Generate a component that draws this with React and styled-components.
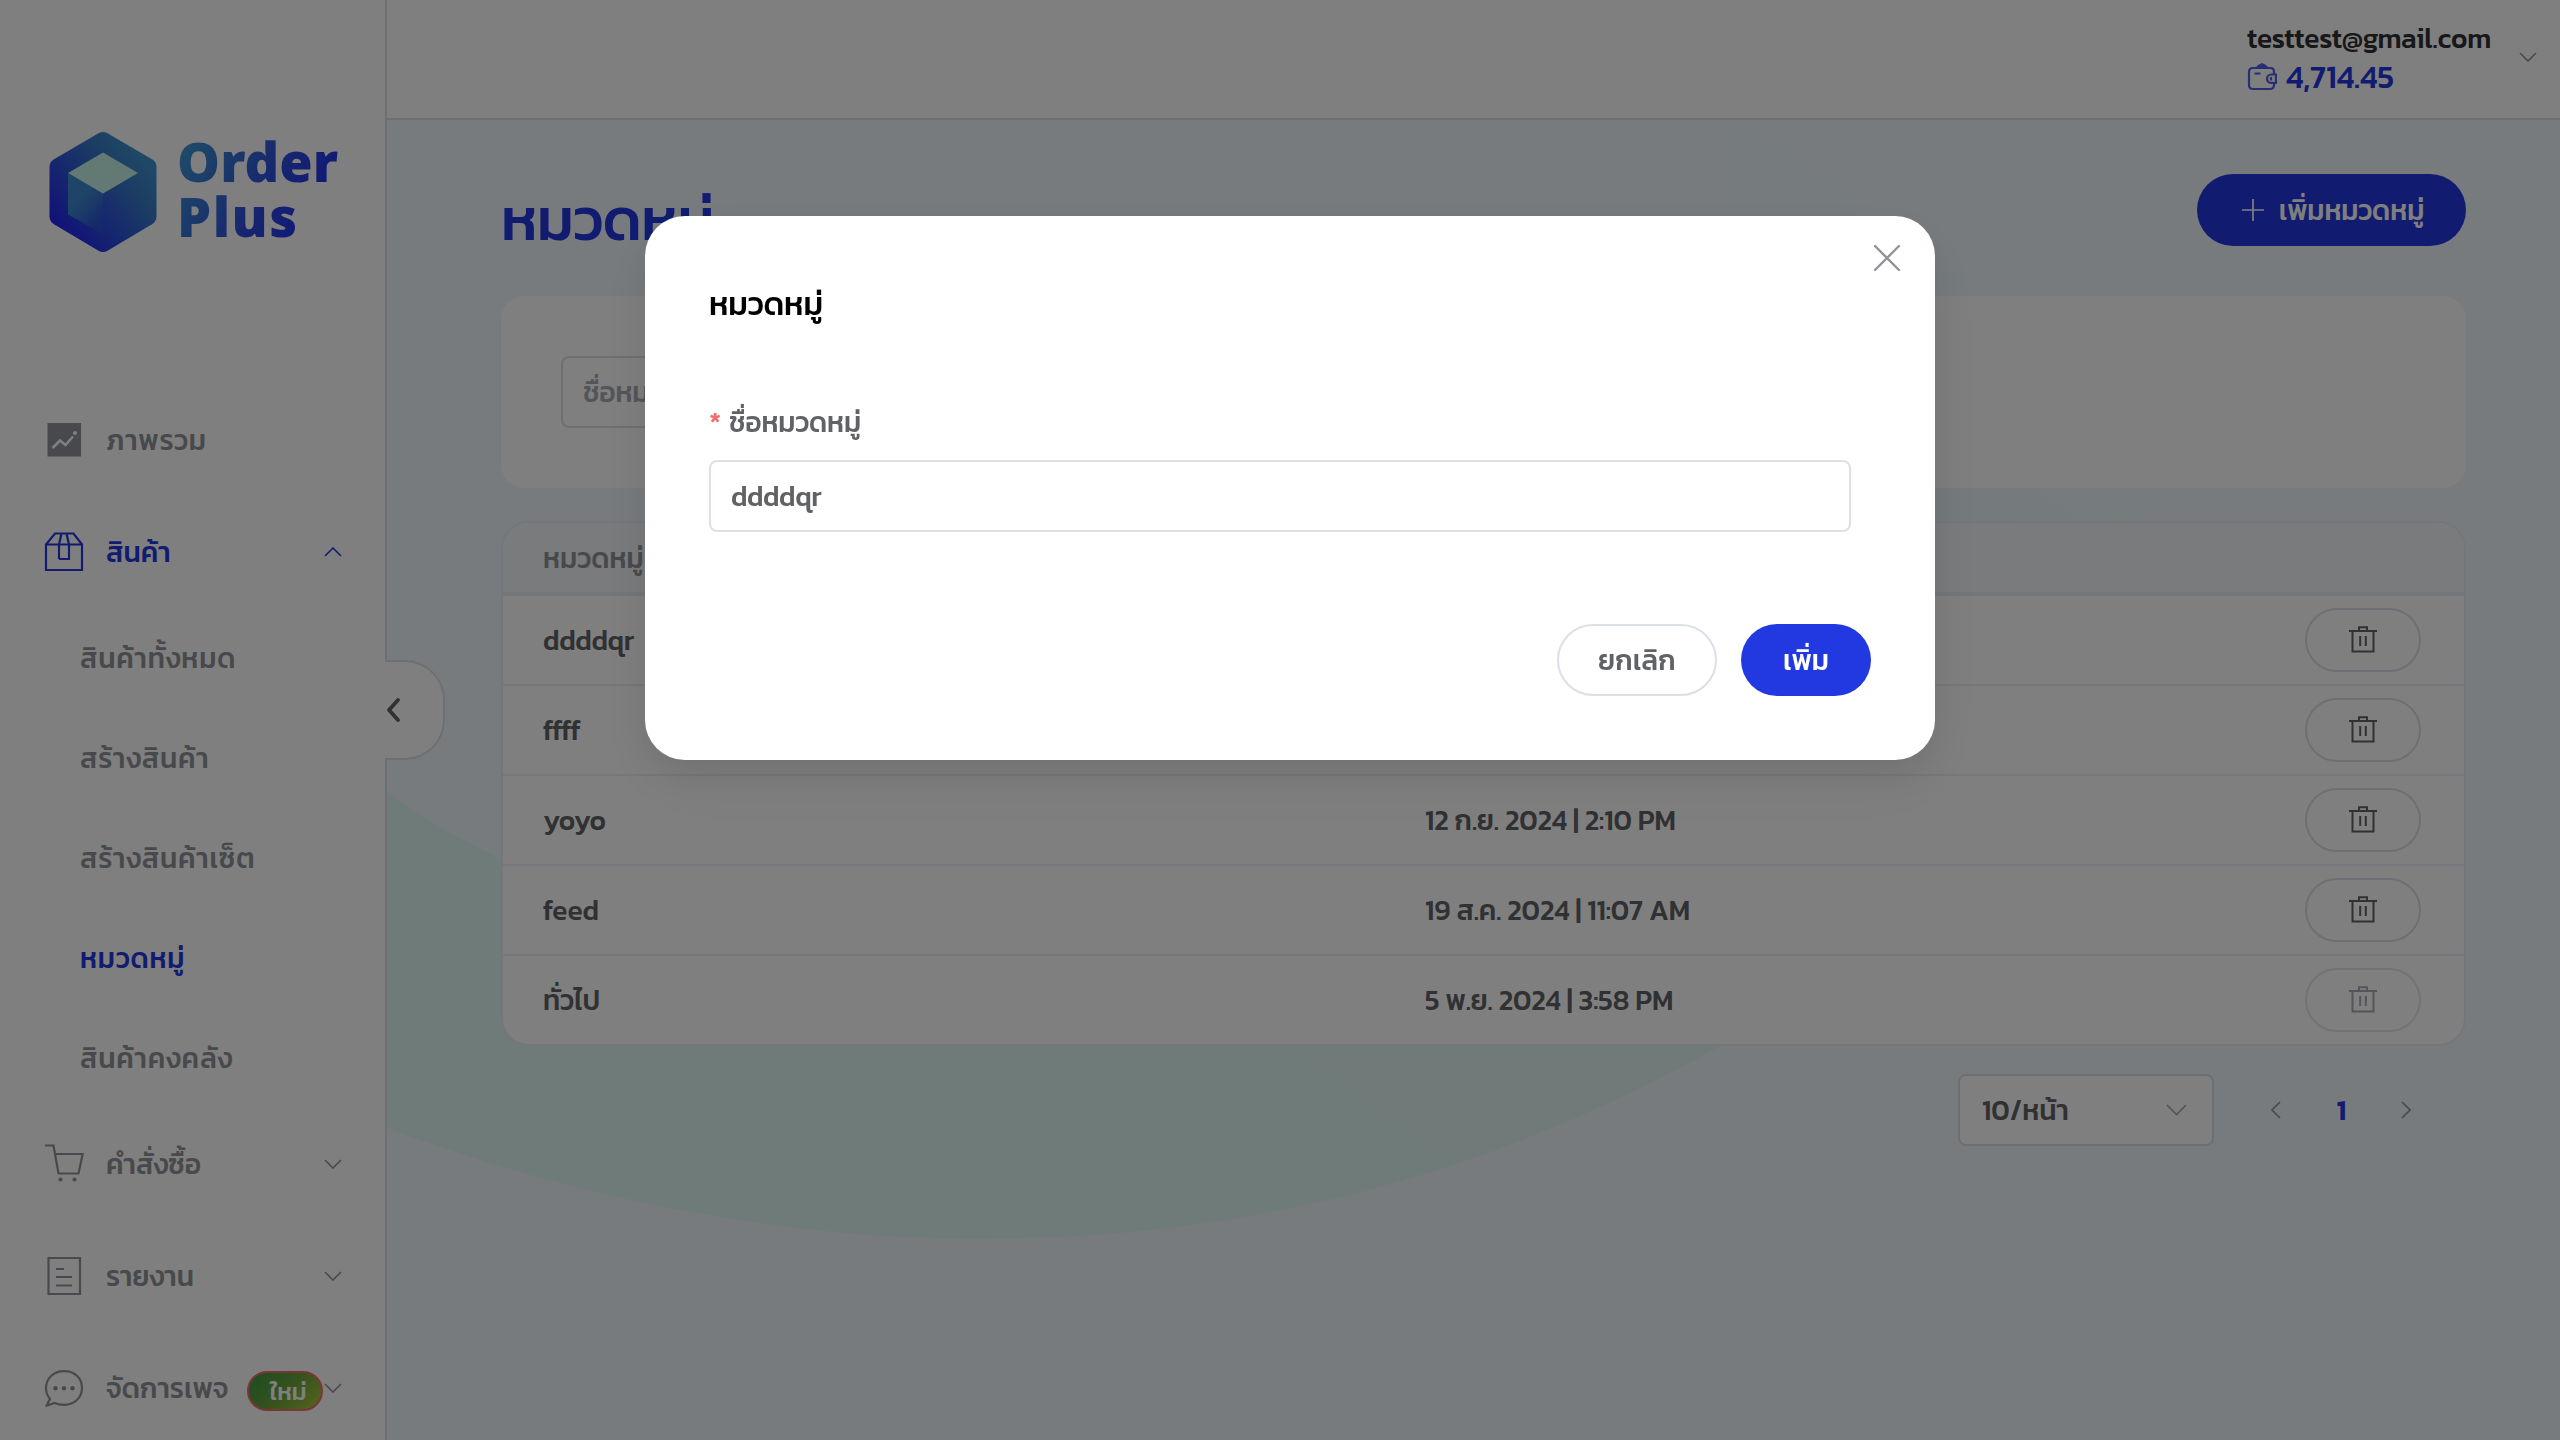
import React from "react";
import styled, { createGlobalStyle, css } from "styled-components";

const GlobalStyle = createGlobalStyle`
  *, *::before, *::after { box-sizing: border-box; }
  html, body, #root { height: 100%; margin: 0; }
  body {
    font-family: Kanit, "Noto Sans Thai", "Noto Sans", sans-serif;
    font-size: 28px;
    font-weight: 500;
    color: #606266;
    overflow: hidden;
  }
  button, input { font: inherit; color: inherit; letter-spacing: inherit; }
`;

const color = {
  primary: "#2239e1",
  muted: "#909399",
  text: "#606266",
  border: "#dcdfe6",
  line: "#ebeef5",
};

/* ---------- icons ---------- */

const Glyph = styled.svg`
  display: block;
  flex: none;
  width: ${(p) => p.$w}px;
  height: ${(p) => p.$h ?? p.$w}px;
  fill: none;
  stroke: currentColor;
  stroke-width: ${(p) => p.$stroke ?? 2.2};
`;

const ChevronDown = () => (
  <Glyph $w={18} $h={10} $stroke={1.6} viewBox="0 0 18 10"><path d="M1 1l8 8 8-8" /></Glyph>
);
const ChevronUp = () => (
  <Glyph $w={18} $h={10} $stroke={1.6} viewBox="0 0 18 10"><path d="M1 9l8-8 8 8" /></Glyph>
);
const SelectCaret = () => (
  <Glyph $w={21} $h={12} $stroke={1.7} viewBox="0 0 21 12"><path d="M1 1l9.500 9.500L20 1" /></Glyph>
);
const ChevronLeft = () => (
  <Glyph $w={10} $h={18} $stroke={1.6} viewBox="0 0 10 18"><path d="M9 1L1 9l8 8" /></Glyph>
);
const ChevronRight = () => (
  <Glyph $w={10} $h={18} $stroke={1.6} viewBox="0 0 10 18"><path d="M1 1l8 8-8 8" /></Glyph>
);
const PlusIcon = () => (
  <Glyph $w={22} $stroke={1.7} viewBox="0 0 22 22"><path d="M11 0v22M0 11h22" /></Glyph>
);
const CloseIcon = () => (
  <Glyph $w={28} $stroke={2.4} viewBox="0 0 28 28"><path d="M2 2l24 24M26 2L2 26" strokeLinecap="round" /></Glyph>
);
const CollapseIcon = () => (
  <Glyph $w={16} $h={26} $stroke={3.8} viewBox="0 0 16 26">
    <path d="M13 3L4 13l9 10" strokeLinecap="round" strokeLinejoin="round" />
  </Glyph>
);

const ChartIcon = () => (
  <Glyph $w={40} viewBox="0 0 40 40">
    <rect x="3.500" y="3" width="33.500" height="33.500" fill="currentColor" stroke="none" />
    <path d="M8.500 28l7.500-7.500 5.500 4.500 7.500-8.500" stroke="#fff" strokeWidth="2.500" />
    <circle cx="31" cy="13" r="2" fill="#fff" stroke="none" />
  </Glyph>
);
const BoxIcon = () => (
  <Glyph $w={40} viewBox="0 0 40 40">
    <path d="M2 12.500L11 1.500h18.500L38 12.500V38H2zM2 12.500h36M15 27V12.500L17.500 1.500M25 12.500V27H15M25 12.500L22.500 1.500" />
  </Glyph>
);
const CartIcon = () => (
  <Glyph $w={40} viewBox="0 0 40 40">
    <path d="M1 1.500h8.500l5 28h20l4.200-19.500H11" />
    <circle cx="16.500" cy="35.500" r="2.100" fill="currentColor" stroke="none" />
    <circle cx="30.500" cy="35.500" r="2.100" fill="currentColor" stroke="none" />
  </Glyph>
);
const ReportIcon = () => (
  <Glyph $w={40} viewBox="0 0 40 40">
    <path d="M4.500 2h31.500v36H4.500zM12 13h8M12 21h16M12 29.500h16" />
  </Glyph>
);
const ChatIcon = () => (
  <Glyph $w={40} viewBox="0 0 40 40">
    <path d="M2.500 37.800L6 30.800C3.200 27.800 2 24.300 2 20.300 2 10.300 9.500 3.100 20 3.100s18 6.700 18 16.700-7.500 17-18 17c-3 0-7-.8-9.300-1.900z" strokeLinejoin="round" />
    <g fill="currentColor" stroke="none">
      <circle cx="11.500" cy="20.300" r="2.200" />
      <circle cx="20" cy="20.300" r="2.200" />
      <circle cx="28.500" cy="20.300" r="2.200" />
    </g>
  </Glyph>
);
const WalletShape = styled(Glyph)`opacity: 0.8;`;
const WalletIcon = () => (
  <WalletShape $w={30} viewBox="0 0 30 30">
    <path d="M27 12V9.500Q27 6 23.500 6H6Q2 6 2 10v13q0 4 4 4h17q4 0 4-4v-2" />
    <path d="M8.500 5.500Q11 2 15 1 19 2 21.500 5.500z" fill="currentColor" stroke="none" />
    <path d="M29 12.500h-4.800a4.200 4.200 0 0 0 0 8.400H29zM24 15v3.500M7.500 11.500h6" />
  </WalletShape>
);
const TrashIcon = () => (
  <Glyph $w={28} $stroke={2} viewBox="0 0 28 28">
    <path d="M0 5h28M3.500 5v20.500h21V5M10 5V1.200h8V5M11.200 10v10M16.800 10v10" />
  </Glyph>
);

const Logo = () => (
  <Glyph $w={110} $h={123} viewBox="0 0 110 123">
    <defs>
      <linearGradient id="hex" x1="0.850" y1="0.200" x2="0.150" y2="0.850">
        <stop offset="0" stopColor="#3e90cc" />
        <stop offset="0.250" stopColor="#387cc8" />
        <stop offset="1" stopColor="#2226ee" />
      </linearGradient>
      <linearGradient id="side" x1="0" y1="0" x2="0.600" y2="1">
        <stop offset="0" stopColor="#3c90d2" />
        <stop offset="0.500" stopColor="#3c86cc" />
        <stop offset="1" stopColor="#2c50d8" />
      </linearGradient>
    </defs>
    <path d="M50.500 2.300q4.500-2.500 9 0l44.500 26q4.500 2.700 4.500 8v49q0 5.300-4.500 8l-44.500 26.500q-4.500 2.500-9 0l-44.500-26.500q-4.500-2.700-4.500-8v-49q0-5.300 4.500-8z" fill="url(#hex)" stroke="none" />
    <path d="M20 42v41.500L55 103V62z" fill="url(#side)" stroke="none" />
    <path d="M55 21.500L90 42 55 62.500 20 42z" fill="#c4f4e6" stroke="none" />
  </Glyph>
);

/* ---------- sidebar ---------- */

const Shell = styled.div`
  display: flex;
  height: 1440px;
  width: 2560px;
`;

const Sidebar = styled.aside`
  position: relative;
  z-index: 1;
  flex: none;
  width: 387px;
  padding-top: 131px;
  background: #fff;
  border-right: 2px solid ${color.border};
`;

const Brand = styled.div`
  display: flex;
  align-items: flex-start;
  gap: 19px;
  height: 253px;
  padding-left: 48px;
`;

const BrandName = styled.div`
  display: flex;
  flex-direction: column;
  width: 170px;
  margin-top: 3px;
  font: 900 54px/54.500px "Noto Sans", sans-serif;
  color: transparent;
  background: linear-gradient(120deg, #3c92d0 8%, #2d49e0 55%, #2030f0 80%);
  background-clip: text;
  -webkit-background-clip: text;
`;

const BrandWord = styled.span`letter-spacing: ${(p) => (p.$wide ? "1.5px" : "0.1px")};`;

const Nav = styled.nav`
  display: flex;
  flex-direction: column;
`;

const NavItem = styled.a`
  display: flex;
  align-items: center;
  height: 112px;
  padding: 0 43px 0 44px;
  letter-spacing: ${(p) => (p.$leaf ? "0.75px" : "0")};
  color: ${(p) => (p.$active ? color.primary : color.muted)};
`;

const NavLabel = styled.span`
  margin-left: 22px;
  flex: 1;
  white-space: nowrap;
`;

const SubItem = styled.a`
  display: flex;
  align-items: center;
  height: 100px;
  padding-left: 80px;
  letter-spacing: 0.75px;
  color: ${(p) => (p.$active ? color.primary : color.muted)};
`;

const NewBadge = styled.span`
  flex: none;
  display: flex;
  align-items: center;
  width: 76px;
  height: 40px;
  margin: 6px 1px 0 0;
  padding-left: 21px;
  border: 2px solid #f56c6c;
  border-radius: 20px;
  background: linear-gradient(135deg, #3a9a48 0%, #6ba53a 50%, #acc83c 100%);
  font-size: 24px;
  color: #fff;
`;

const CollapseTab = styled.button`
  position: absolute;
  top: 660px;
  left: 385px;
  display: flex;
  align-items: center;
  width: 60px;
  height: 100px;
  padding: 0;
  border: 2px solid ${color.border};
  border-left: 0;
  border-radius: 0 40px 40px 0;
  background: #fff;
  color: ${color.text};
`;

/* ---------- header and page ---------- */

const Main = styled.div`
  position: relative;
  flex: 1;
  display: flex;
  flex-direction: column;
  background: #f0f7fd;
`;

const Backdrop = styled.svg`
  position: absolute;
  top: 0;
  left: 0;
  width: 2173px;
  height: 1440px;
`;

const Header = styled.header`
  position: relative;
  display: flex;
  justify-content: flex-end;
  align-items: flex-start;
  height: 120px;
  padding: 18px 23px 0 0;
  background: #fff;
  border-bottom: 2px solid ${color.border};
`;

const Account = styled.div`
  width: 250px;
  margin-right: 22px;
`;

const Email = styled.div`
  line-height: 41px;
  letter-spacing: -0.2px;
  color: #303133;
`;

const Balance = styled.div`
  display: flex;
  align-items: center;
  gap: 9px;
  height: 36px;
  font-size: 32px;
  line-height: 36px;
  color: ${color.primary};
`;

const AccountToggle = styled.div`
  margin-top: 34px;
  color: ${color.muted};
`;

const Content = styled.main`
  position: relative;
  padding: 54px 94px 0 114px;
`;

const PageHead = styled.div`
  display: flex;
  justify-content: space-between;
  height: 122px;
`;

const PageTitle = styled.h1`
  margin: 9px 0 0;
  font-size: 60px;
  font-weight: 500;
  line-height: 72px;
  letter-spacing: -0.5px;
  color: ${color.primary};
`;

const Button = styled.button`
  display: flex;
  align-items: center;
  justify-content: center;
  height: 72px;
  padding: 0;
  width: ${(p) => p.$w}px;
  gap: 14px;
  border-radius: 36px;
  ${(p) =>
    p.$primary
      ? css`border: 0; background: ${color.primary}; color: #fff;`
      : css`border: 2px solid ${color.border}; background: #fff; color: ${color.text};`}
`;

const AddButton = styled(Button)`
  padding-left: 3px;
  gap: 15px;
  letter-spacing: -0.15px;
`;

const FilterCard = styled.section`
  height: 192px;
  padding: 60px;
  border-radius: 24px;
  background: #fff;
`;

const Field = styled.input`
  display: block;
  width: ${(p) => p.$w}px;
  height: 72px;
  padding: 0 20px;
  border: 2px solid ${color.border};
  border-radius: 8px;
  background: #fff;
  color: ${color.text};
  letter-spacing: -0.2px;
  outline: none;
  &::placeholder { color: #a8abb2; }
`;

const Table = styled.section`
  margin-top: 33px;
  border: 2px solid #e8edf3;
  border-radius: 28px;
  background: #fff;
  overflow: hidden;
`;

const tableGrid = css`
  display: grid;
  grid-template-columns: 882px 1fr 116px;
  align-items: center;
  padding: 0 43px 0 40px;
`;

const TableHead = styled.div`
  ${tableGrid}
  height: 73px;
  background: #f5f7fa;
  border-bottom: 4px solid #e9ecf3;
  color: ${color.muted};
`;

const TableRow = styled.div`
  ${tableGrid}
  height: 90px;
  border-bottom: 2px solid ${color.line};
  letter-spacing: -0.1px;
  &:last-child { height: 88px; border-bottom: 0; }
`;

const DeleteButton = styled.button`
  display: flex;
  align-items: center;
  justify-content: center;
  width: 116px;
  height: 64px;
  padding: 0;
  background: #fff;
  border: 2px solid ${(p) => (p.disabled ? "#e4e7ed" : color.border)};
  border-radius: 32px;
  color: ${(p) => (p.disabled ? "#a8abb2" : color.text)};
`;

const Pager = styled.div`
  display: flex;
  align-items: center;
  justify-content: flex-end;
  height: 72px;
  margin-top: 28px;
  padding-right: 55px;
`;

const PageSize = styled.div`
  display: flex;
  align-items: center;
  justify-content: space-between;
  width: 256px;
  height: 72px;
  margin-right: 57px;
  padding: 0 25px 0 22px;
  border: 2px solid ${color.border};
  border-radius: 8px;
  background: #fff;
  color: ${color.text};
`;

const Caret = styled.span`color: #a8abb2;`;

const PageArrow = styled.span`color: ${color.muted};`;

const PageNumber = styled.span`
  width: 120px;
  padding-left: 1px;
  text-align: center;
  font-weight: 600;
  color: ${color.primary};
`;

/* ---------- dialog ---------- */

const Overlay = styled.div`
  position: fixed;
  z-index: 10;
  inset: 0;
  display: flex;
  justify-content: center;
  align-items: flex-start;
  padding: 216px 0 0 20px;
  background: rgba(0, 0, 0, 0.5);
`;

const Dialog = styled.div`
  position: relative;
  width: 1290px;
  height: 544px;
  padding: 64px 64px 0;
  border-radius: 40px;
  background: #fff;
  box-shadow: 0 24px 64px 8px rgba(0, 0, 0, 0.04), 0 16px 40px rgba(0, 0, 0, 0.08);
`;

const CloseButton = styled.button`
  position: absolute;
  top: 28px;
  right: 34px;
  padding: 0;
  border: 0;
  background: none;
  color: ${color.muted};
`;

const DialogTitle = styled.h2`
  margin: 0;
  font-size: 32px;
  font-weight: 500;
  line-height: 48px;
  letter-spacing: -0.2px;
  color: #000;
`;

const FieldLabel = styled.label`
  display: flex;
  gap: 8px;
  margin: 69px 0 12px;
  line-height: 51px;
  letter-spacing: -0.2px;
`;

const Required = styled.span`color: #f56c6c;`;

const DialogFooter = styled.footer`
  display: flex;
  justify-content: flex-end;
  gap: 24px;
  margin-top: 92px;
`;

const rows = [
  { name: "ddddqr" },
  { name: "ffff" },
  { name: "yoyo", date: "12 ก.ย. 2024 | 2:10 PM" },
  { name: "feed", date: "19 ส.ค. 2024 | 11:07 AM" },
  { name: "ทั่วไป", date: "5 พ.ย. 2024 | 3:58 PM", locked: true },
];

const productMenu = ["สินค้าทั้งหมด", "สร้างสินค้า", "สร้างสินค้าเซ็ต", "หมวดหมู่", "สินค้าคงคลัง"];

export default function App() {
  return (
    <>
      <GlobalStyle />
      <Shell>
        <Sidebar>
          <Brand>
            <Logo />
            <BrandName>
              <BrandWord>Order</BrandWord>
              <BrandWord $wide>Plus</BrandWord>
            </BrandName>
          </Brand>
          <Nav>
            <NavItem $leaf><ChartIcon /><NavLabel>ภาพรวม</NavLabel></NavItem>
            <NavItem $active><BoxIcon /><NavLabel>สินค้า</NavLabel><ChevronUp /></NavItem>
            {productMenu.map((t) => <SubItem key={t} $active={t === "หมวดหมู่"}>{t}</SubItem>)}
            <NavItem><CartIcon /><NavLabel>คำสั่งซื้อ</NavLabel><ChevronDown /></NavItem>
            <NavItem><ReportIcon /><NavLabel>รายงาน</NavLabel><ChevronDown /></NavItem>
            <NavItem><ChatIcon /><NavLabel>จัดการเพจ</NavLabel><NewBadge>ใหม่</NewBadge><ChevronDown /></NavItem>
          </Nav>
          <CollapseTab aria-label="collapse"><CollapseIcon /></CollapseTab>
        </Sidebar>
        <Main>
          <Backdrop viewBox="387 0 2173 1440">
            <defs>
              <linearGradient id="blob" gradientUnits="userSpaceOnUse" x1="1000" y1="1240" x2="1800" y2="150">
                <stop offset="0" stopColor="#ddf7f0" />
                <stop offset="0.500" stopColor="#e2f6f3" />
                <stop offset="1" stopColor="#eef7fb" />
              </linearGradient>
            </defs>
            <path fill="url(#blob)" d="M387 792C430 825 465 840 501 859L1700 700 1730 118H2130C2160 180 2172 240 2172 330 2172 560 2040 850 1721 1046 1500 1170 1260 1239 980 1239 770 1239 560 1193 387 1128z" />
          </Backdrop>
          <Header>
            <Account>
              <Email>testtest@gmail.com</Email>
              <Balance><WalletIcon />4,714.45</Balance>
            </Account>
            <AccountToggle><ChevronDown /></AccountToggle>
          </Header>
          <Content>
            <PageHead>
              <PageTitle>หมวดหมู่</PageTitle>
              <AddButton $primary $w={269}><PlusIcon />เพิ่มหมวดหมู่</AddButton>
            </PageHead>
            <FilterCard><Field $w={500} placeholder="ชื่อหมวดหมู่" /></FilterCard>
            <Table>
              <TableHead><span>หมวดหมู่</span></TableHead>
              {rows.map(({ name, date, locked }) => (
                <TableRow key={name}>
                  <span>{name}</span>
                  <span>{date}</span>
                  <DeleteButton disabled={locked} aria-label="delete"><TrashIcon /></DeleteButton>
                </TableRow>
              ))}
            </Table>
            <Pager>
              <PageSize>10/หน้า<Caret><SelectCaret /></Caret></PageSize>
              <PageArrow><ChevronLeft /></PageArrow>
              <PageNumber>1</PageNumber>
              <PageArrow><ChevronRight /></PageArrow>
            </Pager>
          </Content>
        </Main>
      </Shell>
      <Overlay>
        <Dialog role="dialog">
          <CloseButton aria-label="close"><CloseIcon /></CloseButton>
          <DialogTitle>หมวดหมู่</DialogTitle>
          <FieldLabel><Required>*</Required>ชื่อหมวดหมู่</FieldLabel>
          <Field $w={1142} defaultValue="ddddqr" />
          <DialogFooter>
            <Button $w={160}>ยกเลิก</Button>
            <Button $primary $w={130}>เพิ่ม</Button>
          </DialogFooter>
        </Dialog>
      </Overlay>
    </>
  );
}
